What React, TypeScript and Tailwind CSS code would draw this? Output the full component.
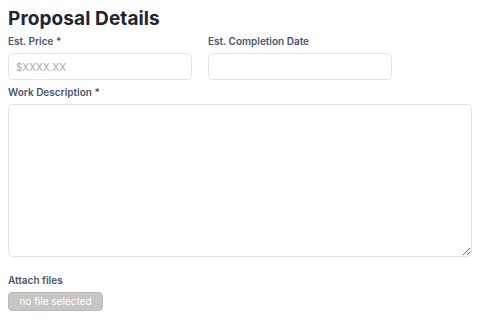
import React from "react";

export default function App() {
  return (
    <div className="w-[500px] h-[328px] bg-white px-2 pt-[8px]" style={{ fontFamily: "Inter, 'Noto Sans', sans-serif" }}>
      <h1 className="text-[19px] leading-[22px] font-bold text-[#1f2533] tracking-[0.1px]">Proposal Details</h1>
      <div className="flex gap-4 mt-[4px]">
        <div className="w-[184px]">
          <label className="block text-[10px] leading-[14px] font-semibold text-[#4a5470]">Est. Price *</label>
          <input
            className="mt-[5px] block w-[184px] h-[27px] rounded-[5px] border border-[#e1e4ee] px-[7px] text-[10px] text-[#9aa0ac] placeholder:text-[#a3a8b3] outline-none"
            placeholder="$XXXX.XX"
          />
        </div>
        <div className="w-[184px]">
          <label className="block text-[10px] leading-[14px] font-semibold text-[#4a5470]">Est. Completion Date</label>
          <input className="mt-[5px] block w-[184px] h-[27px] rounded-[5px] border border-[#e1e4ee] px-[7px] text-[10px] outline-none" />
        </div>
      </div>
      <label className="block mt-[5px] text-[10px] leading-[14px] font-semibold text-[#4a5470]">Work Description *</label>
      <textarea className="mt-[5px] block w-[464px] h-[153px] rounded-[5px] border border-[#e1e4ee] outline-none" />
      <label className="block mt-[16px] text-[10px] leading-[14px] font-semibold text-[#4a5470]">Attach files</label>
      <div className="mt-[5px] w-[95px] h-[19px] rounded-[4px] bg-[#c8c5c5] border border-[#bdbaba] flex items-center justify-center text-[10px] text-white">
        no file selected
      </div>
    </div>
  );
}
